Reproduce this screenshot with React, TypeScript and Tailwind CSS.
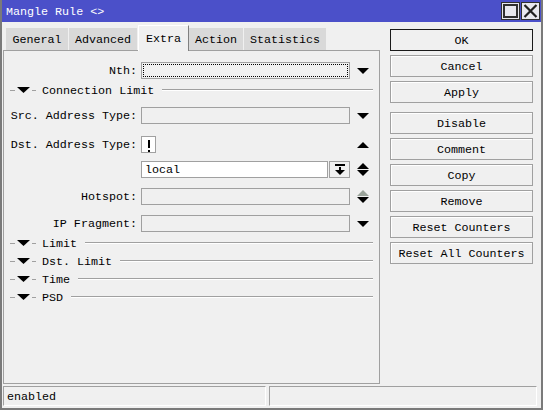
import React from 'react';

const Down = ({ className = 'fill-black' }: { className?: string }) => (
    <svg width="12" height="6" viewBox="0 0 12 6" className={className}>
        <polygon points="0,0 12,0 6,6" />
    </svg>
);

const Up = ({ className = 'fill-black' }: { className?: string }) => (
    <svg width="12" height="6" viewBox="0 0 12 6" className={className}>
        <polygon points="0,6 12,6 6,0" />
    </svg>
);

const Section = ({ title }: { title: string }) => (
    <div className="flex items-center h-[18px] pr-[6px]">
        <div className="ml-[6px] w-[5px] border-t border-[#a0a0a0]" />
        <svg width="13" height="6" viewBox="0 0 13 6" className="ml-[2px] fill-black">
            <polygon points="0,0 13,0 6.5,6" />
        </svg>
        <div className="ml-[2px] w-[4px] border-t border-[#a0a0a0]" />
        <span className="ml-[6px] relative top-[2px]">{title}</span>
        <div className="ml-[8px] flex-1 border-t border-[#a0a0a0] border-b border-b-white" />
    </div>
);

const Row = ({
    label,
    children,
    arrows,
    className = '',
}: {
    label?: string;
    children: React.ReactNode;
    arrows?: React.ReactNode;
    className?: string;
}) => (
    <div className={`flex items-center h-[17px] ${className}`}>
        <div className="w-[133px] text-right whitespace-nowrap relative top-[1px]">{label}</div>
        <div className="ml-[4px] w-[209px] h-full flex">{children}</div>
        <div className="w-[26px] flex flex-col items-center justify-center gap-[1px]">{arrows}</div>
    </div>
);

const Field = ({ focus = false }: { focus?: boolean }) => (
    <div className="relative w-full h-full border border-[#a0a0a0] bg-[#f0f0f0]">
        {focus && <div className="absolute inset-[1px] border border-dotted border-black" />}
    </div>
);

const buttons = [
    ['OK', 'mt-0'],
    ['Cancel', 'mt-[4px]'],
    ['Apply', 'mt-[4px]'],
    ['Disable', 'mt-[9px]'],
    ['Comment', 'mt-[4px]'],
    ['Copy', 'mt-[4px]'],
    ['Remove', 'mt-[4px]'],
    ['Reset Counters', 'mt-[4px]'],
    ['Reset All Counters', 'mt-[4px]'],
];

const tabs = [
    ['General', 'w-[63px]'],
    ['Advanced', 'w-[69px]'],
    ['Extra', 'w-[51px]'],
    ['Action', 'w-[55px]'],
    ['Statistics', 'w-[83px]'],
];

export default function App() {
    return (
        <div className="w-[543px] h-[410px] bg-[#f0f0f0] border-x-2 border-b-2 border-[#7a7a7a] flex flex-col font-['Liberation_Mono',monospace] text-[11.7px] leading-none text-black overflow-hidden">
            {/* title bar */}
            <div className="h-[22px] -mx-[2px] bg-[#4b50c9] flex items-center pl-[6px] pr-[3px] shrink-0">
                <span className="text-white relative top-[2px]">Mangle Rule &lt;&gt;</span>
                <div className="ml-auto flex gap-[1px]">
                    <div className="w-[19px] h-[18px] border border-[#303030] bg-[#e8e8ee] flex items-center justify-center">
                        <div className="w-[15px] h-[14px] border-2 border-[#303030]" />
                    </div>
                    <div className="w-[19px] h-[18px] border border-[#303030] bg-[#e8e8ee] flex items-center justify-center">
                        <svg width="15" height="14" viewBox="0 0 15 14" className="stroke-[#202020]">
                            <path d="M1.5 1 L13.5 13 M13.5 1 L1.5 13" strokeWidth="2.2" />
                        </svg>
                    </div>
                </div>
            </div>

            {/* main */}
            <div className="h-[364px] flex shrink-0">
                <div className="ml-[1px] w-[377px] flex flex-col">
                    <div className="h-[28px] flex items-end pl-[3px]">
                        {tabs.map(([name, w]) =>
                            name === 'Extra' ? (
                                <div
                                    key={name}
                                    className={`${w} h-[26px] -mb-px relative z-10 bg-[#f0f0f0] border-l border-t border-white border-r border-r-[#808080] flex items-center justify-center`}
                                >
                                    <span className="relative top-[1px]">{name}</span>
                                </div>
                            ) : (
                                <div
                                    key={name}
                                    className={`${w} h-[22px] bg-[#d9d9d9] border-r border-[#f0f0f0] flex items-center justify-center`}
                                >
                                    <span className="relative top-[2px]">{name}</span>
                                </div>
                            )
                        )}
                    </div>
                    <div className="h-[334px] border border-[#a0a0a0] flex flex-col pt-[11px]">
                        <Row label="Nth:" arrows={<Down />}>
                            <Field focus />
                        </Row>
                        <div className="mt-[2px]">
                            <Section title="Connection Limit" />
                        </div>
                        <Row label="Src. Address Type:" arrows={<Down />} className="mt-[8px]">
                            <Field />
                        </Row>
                        <Row label="Dst. Address Type:" arrows={<Up />} className="mt-[12px]">
                            <div className="w-[15px] h-[17px] border border-[#a0a0a0] bg-white flex items-center justify-center">
                                <div className="w-[2px] h-[8px] bg-black relative -top-[1px]">
                                    <div className="absolute left-0 top-[10px] w-[2px] h-[2px] bg-black" />
                                </div>
                            </div>
                        </Row>
                        <Row
                            arrows={
                                <>
                                    <Up />
                                    <Down />
                                </>
                            }
                            className="mt-[8px]"
                        >
                            <div className="flex-1 border border-[#a0a0a0] bg-white flex items-center pl-[3px]">
                                <span className="relative top-[1px]">local</span>
                            </div>
                            <div className="ml-[1px] w-[21px] border border-[#a0a0a0] bg-[#f0f0f0] flex items-center justify-center">
                                <svg width="10" height="11" viewBox="0 0 10 11" className="fill-black">
                                    <rect x="0" y="0" width="10" height="2" />
                                    <rect x="4" y="3" width="2" height="4" />
                                    <polygon points="0,6 10,6 5,11" />
                                </svg>
                            </div>
                        </Row>
                        <Row
                            label="Hotspot:"
                            arrows={
                                <>
                                    <Up className="fill-[#9aa39a]" />
                                    <Down />
                                </>
                            }
                            className="mt-[10px]"
                        >
                            <Field />
                        </Row>
                        <Row label="IP Fragment:" arrows={<Down />} className="mt-[10px]">
                            <Field />
                        </Row>
                        <div className="mt-[2px]">
                            <Section title="Limit" />
                            <Section title="Dst. Limit" />
                            <Section title="Time" />
                            <Section title="PSD" />
                        </div>
                    </div>
                </div>

                <div className="ml-[10px] w-[143px] pt-[7px] flex flex-col">
                    {buttons.map(([name, mt]) => (
                        <div
                            key={name}
                            className={`${mt} h-[22px] flex items-center justify-center border ${
                                name === 'OK'
                                    ? 'border-[#1a1a1a]'
                                    : 'border-[#a0a0a0] shadow-[inset_1px_1px_0_#ffffff]'
                            }`}
                        >
                            <span className="relative top-[2px]">{name}</span>
                        </div>
                    ))}
                </div>
            </div>

            {/* status bar */}
            <div className="h-[20px] ml-[1px] flex gap-[3px] shrink-0">
                <div className="w-[263px] h-full border border-[#a0a0a0] border-r-white border-b-white flex items-center pl-[3px]">
                    <span className="relative top-[2px]">enabled</span>
                </div>
                <div className="w-[268px] h-full border border-[#a0a0a0] border-r-white border-b-white" />
            </div>
        </div>
    );
}
